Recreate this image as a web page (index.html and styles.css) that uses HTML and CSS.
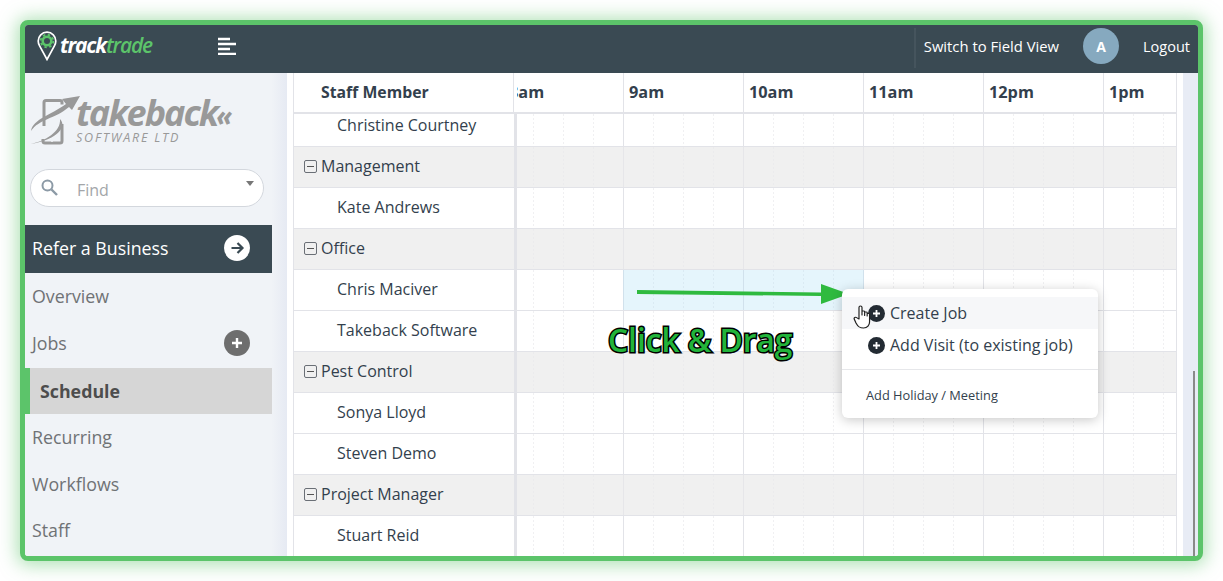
FILE: index.html
```html
<!DOCTYPE html>
<html lang="en">
<head>
<meta charset="utf-8">
<title>Track Trade Schedule</title>
<link rel="stylesheet" href="styles.css">
</head>
<body>
<div class="frame">
  <header class="topbar">
    <div class="brand">
      <svg class="pin" width="20" height="30" viewBox="0 0 20 30">
        <path d="M10 1.200C5 1.200 1.200 5.200 1.200 10c0 1.800.5 3.300 1.400 4.900L10 28.500l7.400-13.600c.9-1.600 1.400-3.100 1.400-4.900C18.800 5.200 15 1.200 10 1.200Z" fill="none" stroke="#fff" stroke-width="1.700"/>
        <circle cx="10" cy="10" r="4.300" fill="none" stroke="#5cc46a" stroke-width="2.600"/>
        <circle cx="10" cy="10" r="6.300" fill="none" stroke="#5cc46a" stroke-width="1.800" stroke-dasharray="2.400 2.550"/>
      </svg>
      <span class="brand-text">track<span class="brand-green">trade</span></span>
    </div>
    <svg class="burger" width="18" height="18" viewBox="0 0 18 18">
      <path d="M0 2h12M0 7h18M0 12h12M0 17h18" stroke="#fff" stroke-width="2.400"/>
    </svg>
    <div class="top-right">
      <span class="top-divider"></span>
      <span class="top-link">Switch to Field View</span>
      <span class="avatar">A</span>
      <span class="top-link logout">Logout</span>
    </div>
  </header>
  <div class="content">
    <aside class="sidebar">
      <div class="company">
        <svg class="company-mark" width="50" height="50" viewBox="0 0 50 50">
          <path d="M13 31V7.500a2 2 0 0 1 2-2h14a2 2 0 0 1 2 2v2M31 29v17a2 2 0 0 1-2 2H14a2 2 0 0 1-2-2v-2" fill="none" stroke="#999" stroke-width="3"/>
          <circle cx="21" cy="46" r="1" fill="#f0f3f7"/>
          <path d="M0 36C2 24 20 20 35 9l-4-5L49 1 41 15l-3-3C24 24 8 24 0 36Z" fill="#999"/>
          <path d="M0 49C14 46 30 37 29 24c7 7-1 20-29 25Z" fill="#999"/>
        </svg>
        <div class="company-text">
          <div class="company-name">takeback<span class="company-chev">«</span></div>
          <div class="company-sub">SOFTWARE LTD</div>
        </div>
      </div>
      <div class="find">
        <svg class="find-icon" width="17" height="17" viewBox="0 0 17 17">
          <circle cx="6.500" cy="6.500" r="5" fill="none" stroke="#8c9aa6" stroke-width="2"/>
          <path d="M10.500 10.500L16 16" stroke="#8c9aa6" stroke-width="2.400"/>
        </svg>
        <span class="find-text">Find</span>
        <span class="find-caret"></span>
      </div>
      <nav class="nav">
        <div class="nav-item refer">
          <span>Refer a Business</span>
          <svg class="nav-btn" width="26" height="26" viewBox="0 0 26 26">
            <circle cx="13" cy="13" r="13" fill="#fff"/>
            <path d="M7.500 13h10.500M13.500 8l5 5-5 5" fill="none" stroke="#3a4a53" stroke-width="2.200"/>
          </svg>
        </div>
        <div class="nav-item">Overview</div>
        <div class="nav-item">
          <span>Jobs</span>
          <svg class="nav-btn" width="26" height="26" viewBox="0 0 26 26">
            <circle cx="13" cy="13" r="13" fill="#6e6e6e"/>
            <path d="M8 13h10M13 8v10" stroke="#fff" stroke-width="2.400"/>
          </svg>
        </div>
        <div class="nav-item active">Schedule</div>
        <div class="nav-item">Recurring</div>
        <div class="nav-item">Workflows</div>
        <div class="nav-item">Staff</div>
      </nav>
    </aside>
    <main class="main">
      <div class="grid">
        <div class="grid-head">
          <div class="staff-head">Staff Member</div>
          <div class="hours">
            <span class="hour first">8am</span>
            <span class="hour">9am</span>
            <span class="hour">10am</span>
            <span class="hour">11am</span>
            <span class="hour">12pm</span>
            <span class="hour">1pm</span>
          </div>
        </div>
        <div class="rows">
          <div class="row scrolled"><div class="name person">Christine Courtney</div><div class="slots"></div></div>
          <div class="row group"><div class="name"><span class="toggle"></span>Management</div><div class="slots"></div></div>
          <div class="row"><div class="name person">Kate Andrews</div><div class="slots"></div></div>
          <div class="row group"><div class="name"><span class="toggle"></span>Office</div><div class="slots"></div></div>
          <div class="row"><div class="name person">Chris Maciver</div><div class="slots"><div class="selection"></div></div></div>
          <div class="row"><div class="name person">Takeback Software</div><div class="slots"></div></div>
          <div class="row group"><div class="name"><span class="toggle"></span>Pest Control</div><div class="slots"></div></div>
          <div class="row"><div class="name person">Sonya Lloyd</div><div class="slots"></div></div>
          <div class="row"><div class="name person">Steven Demo</div><div class="slots"></div></div>
          <div class="row group"><div class="name"><span class="toggle"></span>Project Manager</div><div class="slots"></div></div>
          <div class="row"><div class="name person">Stuart Reid</div><div class="slots"></div></div>
        </div>
      </div>
    </main>
    <div class="scroll-strip"><div class="scroll-thumb"></div></div>
  </div>

  <svg class="drag-arrow" width="214" height="22" viewBox="0 0 214 22">
    <path d="M0 6L184 8.500V0L212 10 184 20V12L0 10Z" fill="#2fba3f"/>
  </svg>
  <div class="drag-label">Click &amp; Drag</div>

  <div class="menu">
    <div class="menu-item hot">
      <svg class="menu-icon" width="17" height="17" viewBox="0 0 17 17"><circle cx="8.500" cy="8.500" r="8.500" fill="#232b33"/><path d="M5 8.500h7M8.500 5v7" stroke="#fff" stroke-width="1.800"/></svg>
      <span>Create Job</span>
    </div>
    <div class="menu-item">
      <svg class="menu-icon" width="17" height="17" viewBox="0 0 17 17"><circle cx="8.500" cy="8.500" r="8.500" fill="#232b33"/><path d="M5 8.500h7M8.500 5v7" stroke="#fff" stroke-width="1.800"/></svg>
      <span>Add Visit (to existing job)</span>
    </div>
    <div class="menu-line"></div>
    <div class="menu-small">Add Holiday / Meeting</div>
  </div>

  <svg class="hand" width="18" height="24" viewBox="0 0 15 24" preserveAspectRatio="none">
    <path d="M5 14V2.500C5 1.500 5.500 1 6.200 1s1.300.5 1.300 1.500V10V6.500c0-.8 2.200-.8 2.200 0V10.500V7.500c0-.8 2.100-.8 2.100 0V11V9c0-.8 2-.8 2 0v8c0 3-1.800 6-5 6-3.500 0-4.800-1.500-6.300-5L1 14c-.5-1.300 1-2.300 2-1.300Z" fill="#fff" stroke="#222" stroke-width="1" stroke-linejoin="round"/>
  </svg>
</div>
</body>
</html>
```
FILE: styles.css
```css
* { box-sizing: border-box; }
html, body { margin: 0; padding: 0; background: #fff; }
body { font-family: "Open Sans", sans-serif; color: #333f4d; width: 1223px; height: 581px; overflow: hidden; padding: 20px; }

.frame {
  position: relative;
  width: 1183px;
  height: 541px;
  border: 5px solid #5cc46a;
  border-radius: 8px;
  box-shadow: 0 1px 18px 3px rgba(92, 196, 106, .5);
  overflow: hidden;
  display: flex;
  flex-direction: column;
  background: #fff;
}

/* top bar */
.topbar { height: 48px; flex: none; background: #3a4a53; display: flex; align-items: center; padding-bottom: 6px; color: #fff; }
.brand { display: flex; align-items: center; margin-left: 12px; width: 181px; }
.pin { flex: none; margin-top: -1px; }
.brand-text { font-style: italic; font-weight: 700; font-size: 21px; letter-spacing: -1.200px; margin-left: 3px; margin-top: -3px; color: #fff; }
.brand-green { color: #5cc46a; font-weight: 600; }
.burger { flex: none; }
.top-right { margin-left: auto; display: flex; align-items: center; }
.top-divider { width: 2px; height: 40px; background: #45545d; margin-right: 8px; margin-top: 3px; }
.top-link { font-size: 14.800px; color: #fff; }
.avatar { width: 36px; height: 36px; border-radius: 50%; background: #86a9bf; color: #fff; font-weight: 700; font-size: 14px; display: flex; align-items: center; justify-content: center; margin: 0 24px; }
.logout { margin-right: 8px; font-size: 14.500px; }

/* layout */
.content { flex: 1; display: flex; min-height: 0; }

/* sidebar */
.sidebar { width: 262px; flex: none; background: linear-gradient(90deg, #f0f3f7 94%, #e6eaf3 100%); display: flex; flex-direction: column; }
.company { height: 96px; flex: none; display: flex; padding: 23px 0 0 6px; }
.company-mark { flex: none; margin: -1px -5px 0 0; }
.company-text { color: #999; }
.company-name { font-style: italic; font-weight: 700; font-size: 36px; line-height: 34px; letter-spacing: -2px; white-space: nowrap; }
.company-chev { font-size: 28px; margin-left: -1px; }
.company-sub { font-style: italic; font-weight: 400; font-size: 12.500px; line-height: 12px; letter-spacing: 1.800px; white-space: nowrap; }

.find { width: 234px; height: 38px; flex: none; margin: 0 0 18px 5px; border: 1px solid #d3d7dd; border-radius: 19px; background: #fff; display: flex; align-items: center; padding: 0 10px; }
.find-icon { flex: none; margin-top: -2px; }
.find-text { margin-left: 19px; margin-top: 3px; font-size: 16px; color: #a3a6a9; }
.find-caret { margin-left: auto; margin-top: -10px; margin-right: -1px; border: 4px solid transparent; border-top: 5px solid #777; border-bottom: 0; }

.nav { width: 247px; flex: none; }
.nav-item { height: 46.500px; display: flex; align-items: center; justify-content: space-between; padding: 0 22px 0 7px; font-size: 17.800px; color: #6f7275; }
.refer { height: 48px; padding-bottom: 2px; background: #3a4a53; color: #fff; }
.active { height: 46px; margin-top: 2px; background: #d6d6d6; border-left: 5px solid #5cc46a; padding-left: 10px; font-weight: 700; color: #4d4d4d; }

/* main */
.main { width: 896px; flex: none; padding: 0 6px; background: #fff; min-height: 0; overflow: hidden; }
.grid { width: 884px; height: 100%; display: flex; flex-direction: column; border-left: 1px solid #e2e3e8; border-right: 1px solid #e2e3e8; }
.grid-head { height: 41px; flex: none; display: flex; border-bottom: 2px solid #e2e3e8; }
.staff-head { width: 220px; flex: none; border-right: 1px solid #e2e3e8; margin-right: 3px; padding-left: 27px; font-weight: 700; font-size: 15.800px; line-height: 39px; color: #333f4d; }
.hours { flex: 1; display: flex; overflow: hidden; }
.hour { width: 120px; flex: none; padding-left: 5px; border-right: 1px solid #e2e3e8; font-weight: 700; font-size: 16.300px; line-height: 38px; color: #333f4d; }
.first { margin-left: -13px; }

.rows { flex: 1; overflow: hidden; min-height: 0; }
.row { height: 41px; display: flex; border-bottom: 1px solid #e2e3e8; }
.scrolled { margin-top: -8px; }
.group { background: #f0f0f0; }
.name { width: 223px; flex: none; border-right: 3px solid #e2e3e8; padding: 0 0 2px 10px; display: flex; align-items: center; font-size: 16px; color: #333f4d; white-space: nowrap; }
.person { padding-left: 43px; background: #fff; }
.toggle { width: 13px; height: 13px; border: 1px solid #6a6f76; border-radius: 2px; margin-right: 4px; position: relative; flex: none; }
.toggle::after { content: ""; position: absolute; left: 2px; right: 2px; top: 5px; height: 1px; background: #555; }

.slots {
  flex: 1;
  background-image: url("data:image/svg+xml,%3Csvg xmlns='http://www.w3.org/2000/svg' width='120' height='4'%3E%3Crect x='119' width='1' height='4' fill='%23e2e3e8'/%3E%3Crect x='29' width='1' height='2' fill='%23f0f0f2'/%3E%3Crect x='59' width='1' height='2' fill='%23f0f0f2'/%3E%3Crect x='89' width='1' height='2' fill='%23f0f0f2'/%3E%3C/svg%3E");
  background-position: -13px 0;
  background-repeat: repeat;
}
.group .slots { background-image: url("data:image/svg+xml,%3Csvg xmlns='http://www.w3.org/2000/svg' width='120' height='4'%3E%3Crect x='119' width='1' height='4' fill='%23e6e6e9'/%3E%3Crect x='29' width='1' height='2' fill='%23ebebed'/%3E%3Crect x='59' width='1' height='2' fill='%23ebebed'/%3E%3Crect x='89' width='1' height='2' fill='%23ebebed'/%3E%3C/svg%3E"); }
.selection { margin-left: 106px; width: 241px; height: 40px; background: rgba(170, 222, 245, .3); }

.scroll-strip { flex: 1; background: #e8ecf5; position: relative; }
.scroll-thumb { position: absolute; left: 10px; width: 2px; bottom: 0; height: 185px; background: #8a8a8a; }

/* overlays on the schedule */
.drag-arrow { position: absolute; left: 612px; top: 259px; }
.drag-label { position: absolute; left: 583px; top: 294px; font-weight: 600; font-size: 31.700px; line-height: 42px; color: #22b43a; -webkit-text-stroke: 3px #000; paint-order: stroke fill; white-space: nowrap; }

.menu { position: absolute; left: 817px; top: 264px; width: 256px; height: 129px; background: #fff; border-radius: 6px; box-shadow: 0 2px 12px rgba(0, 0, 0, .22); padding-top: 8px; }
.menu-item { height: 32px; display: flex; align-items: center; padding-left: 26px; font-size: 16px; color: #333f4d; white-space: nowrap; }
.hot { background: #f6f7f9; }
.menu-icon { flex: none; margin-right: 5px; }
.menu-line { height: 1px; background: #e6e7ea; margin-top: 8px; }
.menu-small { font-size: 12.800px; line-height: 17px; margin-top: 17px; padding-left: 24px; color: #333f4d; }

.hand { position: absolute; left: 828px; top: 280px; }
```
